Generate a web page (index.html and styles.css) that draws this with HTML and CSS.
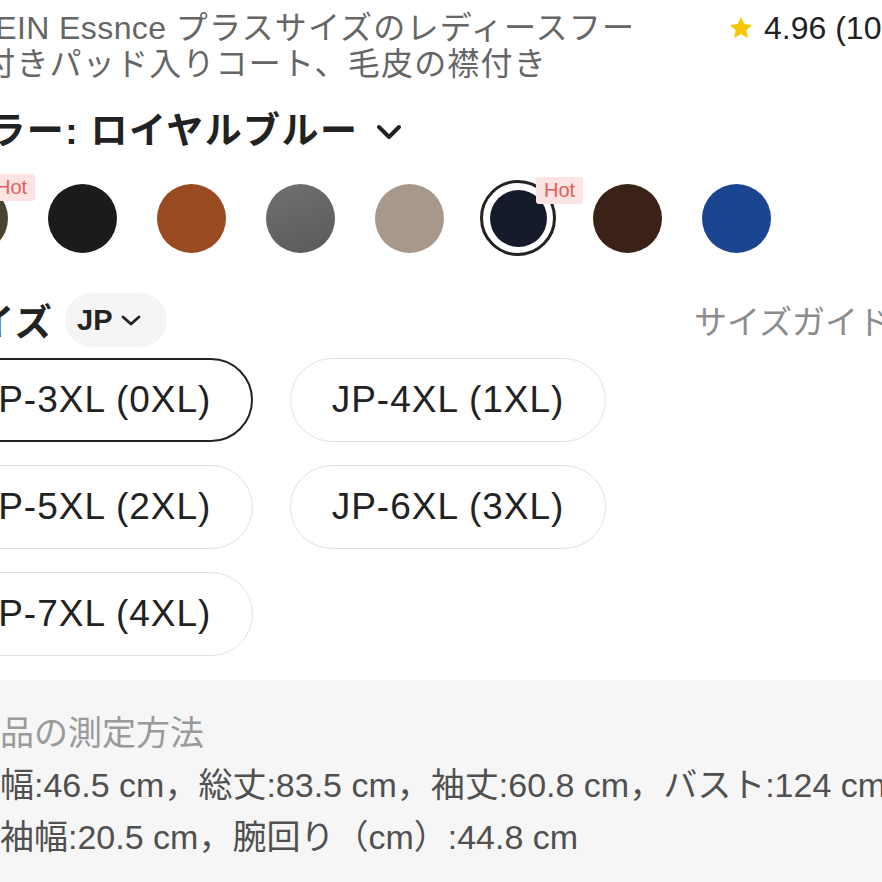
FILE: index.html
```html
<!DOCTYPE html>
<html lang="ja">
  <head>
    <meta charset="UTF-8" />
    <meta name="viewport" content="width=device-width, initial-scale=1.0" />
    <title>SHEIN Essnce プラスサイズ コート</title>
    <link rel="stylesheet" href="styles.css">
  </head>
  <body>
    <div class="page">
      <div class="title-row">
        <h1 class="title"><span class="brand">SHEIN Essnce </span>プラスサイズのレディースフード付きパッド入りコート、毛皮の襟付き</h1>
        <div class="rating">
          <svg class="star" viewBox="0 0 24 24" width="26" height="26">
            <path d="M12 1.8l3.1 6.6 7.1.8-5.3 4.9 1.5 7.1L12 17.6l-6.4 3.6 1.5-7.1L1.8 9.2l7.1-.8z" fill="#f7c600" />
          </svg>
          <span>4.96 (1000+)</span>
        </div>
      </div>

      <div class="color-head">
        <span>カラー: ロイヤルブルー</span>
        <svg class="chev" viewBox="0 0 26 16" width="26" height="16">
          <path d="M3 3l10 10 10-10" fill="none" stroke="#222" stroke-width="4" stroke-linecap="round" stroke-linejoin="round" />
        </svg>
      </div>

      <div class="swatches">
        <div class="swatch"><span class="dot olive"></span><span class="hot">Hot</span></div>
        <div class="swatch"><span class="dot black"></span></div>
        <div class="swatch"><span class="dot rust"></span></div>
        <div class="swatch"><span class="dot grey"></span></div>
        <div class="swatch"><span class="dot taupe"></span></div>
        <div class="swatch selected"><span class="dot navy"></span><span class="hot">Hot</span></div>
        <div class="swatch"><span class="dot coffee"></span></div>
        <div class="swatch"><span class="dot royal"></span></div>
      </div>

      <div class="size-head">
        <div class="size-left">
          <span class="size-label">サイズ</span>
          <span class="unit-pill">JP
            <svg viewBox="0 0 24 14" width="24" height="14">
              <path d="M4 4l8 7 8-7" fill="none" stroke="#222" stroke-width="2.8" stroke-linecap="round" stroke-linejoin="round" />
            </svg>
          </span>
        </div>
        <span class="size-guide">サイズガイド
          <svg viewBox="0 0 14 22" width="14" height="22">
            <path d="M3 3l8 8-8 8" fill="none" stroke="#999" stroke-width="2.4" stroke-linecap="round" stroke-linejoin="round" />
          </svg>
        </span>
      </div>

      <div class="sizes">
        <button class="size-btn active">JP-3XL (0XL)</button>
        <button class="size-btn">JP-4XL (1XL)</button>
        <button class="size-btn">JP-5XL (2XL)</button>
        <button class="size-btn">JP-6XL (3XL)</button>
        <button class="size-btn">JP-7XL (4XL)</button>
      </div>

      <div class="measure">
        <div class="measure-title">商品の測定方法</div>
        <div class="measure-line">肩幅:46.5 cm，総丈:83.5 cm，袖丈:60.8 cm，バスト:124 cm，</div>
        <div class="measure-line cont">袖幅:20.5 cm，腕回り（cm）:44.8 cm</div>
      </div>
    </div>
  </body>
</html>
```

FILE: styles.css
```css
html {
  background-color: #ffffff;
  font-family: "Liberation Sans", "Noto Sans CJK JP", sans-serif;
}

body {
  margin: 0;
  padding: 0;
  overflow: hidden;
  height: 882px;
}

.page {
  margin-left: -50px;
  width: 1000px;
  padding-top: 10px;
}

.title-row {
  display: flex;
  align-items: flex-start;
  gap: 73px;
}

.title {
  flex: none;
  width: 705px;
  margin: 0;
  font-size: 32px;
  font-weight: normal;
  letter-spacing: 1.2px;
  line-height: 36px;
  color: #666666;
}

.brand {
  letter-spacing: 0.4px;
}

.rating {
  display: flex;
  align-items: center;
  gap: 10px;
  font-size: 32px;
  line-height: 36px;
  color: #222222;
  white-space: nowrap;
}

.color-head {
  display: flex;
  align-items: center;
  margin-top: 28px;
  font-size: 37px;
  font-weight: bold;
  letter-spacing: 1.4px;
  line-height: 44px;
  color: #222222;
}

.chev {
  margin-left: 18px;
}

.swatches {
  display: flex;
  gap: 33px;
  margin-top: 26px;
  margin-left: -15px;
}

.swatch {
  position: relative;
  flex: none;
  width: 76px;
  height: 76px;
  display: flex;
  align-items: center;
  justify-content: center;
  box-sizing: border-box;
  border-radius: 50%;
}

.dot {
  width: 69px;
  height: 69px;
  border-radius: 50%;
}

.swatch.selected {
  border: 3px solid #222222;
}

.swatch.selected .dot {
  width: 57px;
  height: 57px;
}

.hot {
  position: absolute;
  top: -6px;
  left: 53px;
  padding: 1px 8px;
  background-color: #fde3e1;
  color: #e0615c;
  font-size: 20px;
  line-height: 25px;
  border-radius: 3px;
}

.olive { background-color: #4b4232; }
.black { background-color: #1b1b1b; }
.rust { background-color: #9a4a20; }
.grey { background: linear-gradient(160deg, #707070, #5a5a5a); }
.taupe { background-color: #a8978b; }
.navy { background-color: #161b2b; }
.coffee { background-color: #3a2219; }
.royal { background-color: #1b4591; }

.size-head {
  display: flex;
  align-items: center;
  justify-content: space-between;
  width: 976px;
  margin-top: 37px;
  margin-left: -11px;
}

.size-left {
  display: flex;
  align-items: center;
  gap: 12px;
}

.size-label {
  font-size: 37px;
  font-weight: bold;
  letter-spacing: 1.4px;
  color: #222222;
}

.unit-pill {
  display: flex;
  align-items: center;
  gap: 6px;
  height: 54px;
  padding: 0 24px 0 12px;
  border-radius: 27px;
  background-color: #f5f5f5;
  font-size: 29px;
  font-weight: bold;
  color: #222222;
}

.size-guide {
  display: flex;
  align-items: center;
  gap: 10px;
  font-size: 33px;
  color: #8c8c8c;
}

.sizes {
  display: grid;
  grid-template-columns: 316px 316px;
  gap: 23px 37px;
  margin-top: 11px;
  margin-left: -13px;
}

.size-btn {
  height: 84px;
  border: 1.5px solid #e2e2e2;
  border-radius: 42px;
  background-color: #ffffff;
  font-family: "Liberation Sans", "Noto Sans CJK JP", sans-serif;
  font-size: 37px;
  letter-spacing: 1px;
  color: #222222;
  padding: 0;
}

.size-btn.active {
  border: 2.5px solid #222222;
}

.measure {
  margin-top: 24px;
  padding: 27px 0 40px 16px;
  background-color: #f6f6f6;
  line-height: 52px;
}

.measure-title {
  font-size: 34px;
  color: #9a9a9a;
}

.measure-line {
  font-size: 34px;
  color: #505050;
  white-space: nowrap;
}

.measure-line.cont {
  padding-left: 34px;
}
```
